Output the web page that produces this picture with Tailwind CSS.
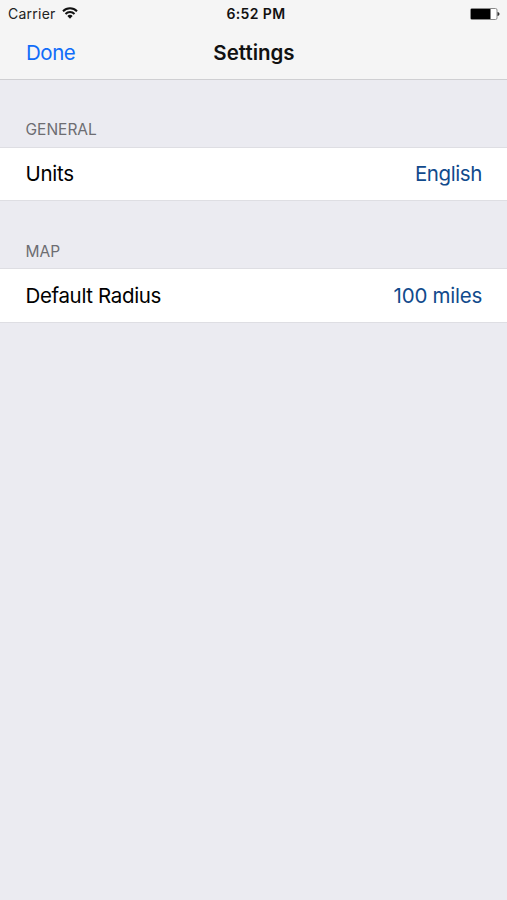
<!DOCTYPE html>
<html lang="en">
<head>
    <meta charset="UTF-8">
    <meta name="viewport" content="width=device-width, initial-scale=1.0">
    <title>Settings</title>
    <script src="https://cdn.jsdelivr.net/npm/@tailwindcss/browser@4"></script>
</head>
<body class="bg-[#ebebf1] font-['Inter',sans-serif] text-black">
<main class="min-h-screen flex flex-col">

    <header class="h-20 bg-[#f5f5f5] border-b border-[#cfcfd2]">
        <!-- status bar -->
        <div class="h-7 grid grid-cols-3 items-center pl-2 pr-[7px]">
            <div class="flex items-center gap-1.5">
                <span class="text-[14px] leading-7 tracking-[0.25px] text-[#222]">Carrier</span>
                <svg class="w-4 h-3 mb-0.5" viewBox="0 0 16 12" fill="none" stroke="#111" stroke-width="2">
                    <path d="M1 4.2a10 10 0 0 1 14 0" />
                    <path d="M3.5 7a6.3 6.3 0 0 1 9 0" />
                    <path d="M8 11.8 5.4 9a3.5 3.5 0 0 1 5.2 0z" fill="#111" stroke="none" />
                </svg>
            </div>
            <span class="pl-1 pb-0.5 text-center text-[14px] font-semibold tracking-[0.4px] whitespace-nowrap text-[#111]">6:52 PM</span>
            <svg class="w-[30px] h-3 mb-px justify-self-end" viewBox="0 0 30 12">
                <rect x=".5" y=".5" width="26.5" height="11" rx="1.5" fill="#fff" stroke="#8a8a8a" />
                <rect x="1" y="1" width="19.5" height="10" />
                <path d="M27.5 4c2.7.3 2.7 3.7 0 4z" fill="#333" />
            </svg>
        </div>

        <!-- navigation bar -->
        <div class="h-[51px] grid grid-cols-3 items-center px-[26px]">
            <button type="button" class="text-left text-[20.5px] tracking-[-0.45px] text-[#0f6cf9]">Done</button>
            <h1 class="pl-px text-center text-[20.5px] font-semibold text-[#111]">Settings</h1>
        </div>
    </header>

    <section>
        <h2 class="h-[67px] pt-[38px] pl-[25.5px] text-[15.5px] leading-6 text-[#6d6d72]">GENERAL</h2>
        <div class="h-[54px] flex items-center justify-between pl-[25.5px] pr-[25px] bg-white border-y border-[#dedee3] text-[20.5px]">
            <span class="tracking-[-0.3px]">Units</span>
            <span class="tracking-[-0.4px] text-[#114a8c]">English</span>
        </div>
    </section>

    <section>
        <h2 class="h-[67px] pt-[39px] pl-[25.5px] text-[15.5px] leading-6 text-[#6d6d72]">MAP</h2>
        <div class="h-[55px] pt-px flex items-center justify-between pl-[25.5px] pr-[25px] bg-white border-y border-[#dedee3] text-[20.5px]">
            <span class="tracking-[-0.35px]">Default Radius</span>
            <span class="tracking-[-0.25px] text-[#114a8c]">100 miles</span>
        </div>
    </section>
</main>
</body>
</html>
